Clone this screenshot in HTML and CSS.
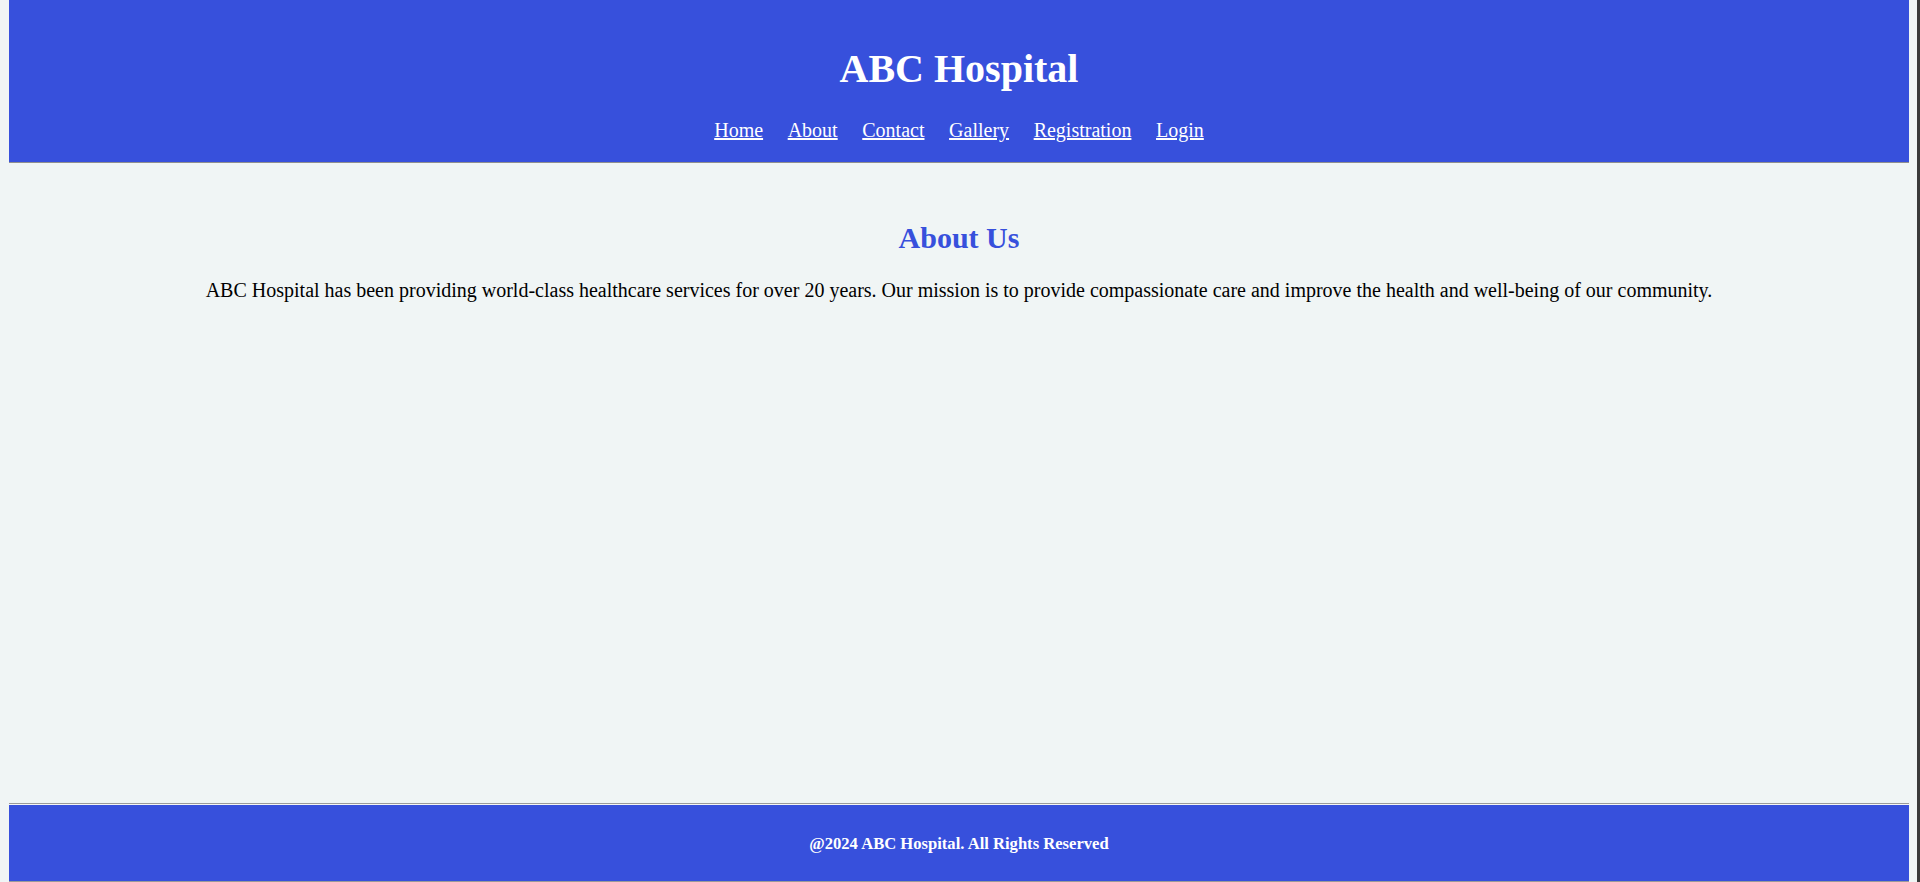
FILE: index.html
```html
<!DOCTYPE html>
<html lang="en">
<head>
<meta charset="utf-8">
<title>ABC Hospital - About</title>
<link rel="stylesheet" href="styles.css">
</head>
<body>
<header class="site-header">
  <h1 class="site-title">ABC Hospital</h1>
  <nav class="site-nav">
    <a href="#">Home</a>
    <a href="#">About</a>
    <a href="#">Contact</a>
    <a href="#">Gallery</a>
    <a href="#">Registration</a>
    <a href="#">Login</a>
  </nav>
</header>
<main class="content">
  <h2 class="section-title">About Us</h2>
  <p class="section-text">ABC Hospital has been providing world-class healthcare services for over 20 years. Our mission is to provide compassionate care and improve the health and well-being of our community.</p>
</main>
<footer class="site-footer">
  <p class="footer-text">@2024 ABC Hospital. All Rights Reserved</p>
</footer>
</body>
</html>
```
FILE: styles.css
```css
html {
  background: #f0f5f5;
  border-right: 3px solid #3a3a3a;
  height: 100%;
  box-sizing: border-box;
}
body {
  margin: 0 8px 0 9px;
  min-height: 100vh;
  display: flex;
  flex-direction: column;
  font-family: "Liberation Serif", "Times New Roman", serif;
  color: #000;
  background: #f0f5f5;
}
.site-header {
  background: #3750dc;
  color: #fff;
  text-align: center;
  padding: 20px 0;
  box-shadow: 0 1px 0 #8f8f8f;
}
.site-title {
  font-size: 40px;
  font-weight: bold;
  margin: 26px 0 27px;
  line-height: 46px;
}
.site-nav {
  display: flex;
  justify-content: center;
  gap: 24.6px;
  font-size: 20px;
  line-height: 23px;
}
.site-nav a {
  color: #fff;
  text-decoration: underline;
}
.content {
  flex: 1;
  text-align: center;
  padding: 34px 20px 0;
}
.section-title {
  color: #3750dc;
  font-size: 30px;
  font-weight: bold;
  line-height: 34px;
  margin: 25px 0 24px;
}
.section-text {
  font-size: 20px;
  line-height: 23px;
  margin: 20px 0;
}
.site-footer {
  background: #3750dc;
  color: #fff;
  text-align: center;
  border-top: 1px solid #9a9a9a;
  border-bottom: 1px solid #9a9a9a;
  box-shadow: inset 0 1px 0 #f4f4f4;
  padding: 30px 0 28px;
}
.footer-text {
  margin: 0;
  font-size: 16.6px;
  font-weight: bold;
  line-height: 19px;
}
```
